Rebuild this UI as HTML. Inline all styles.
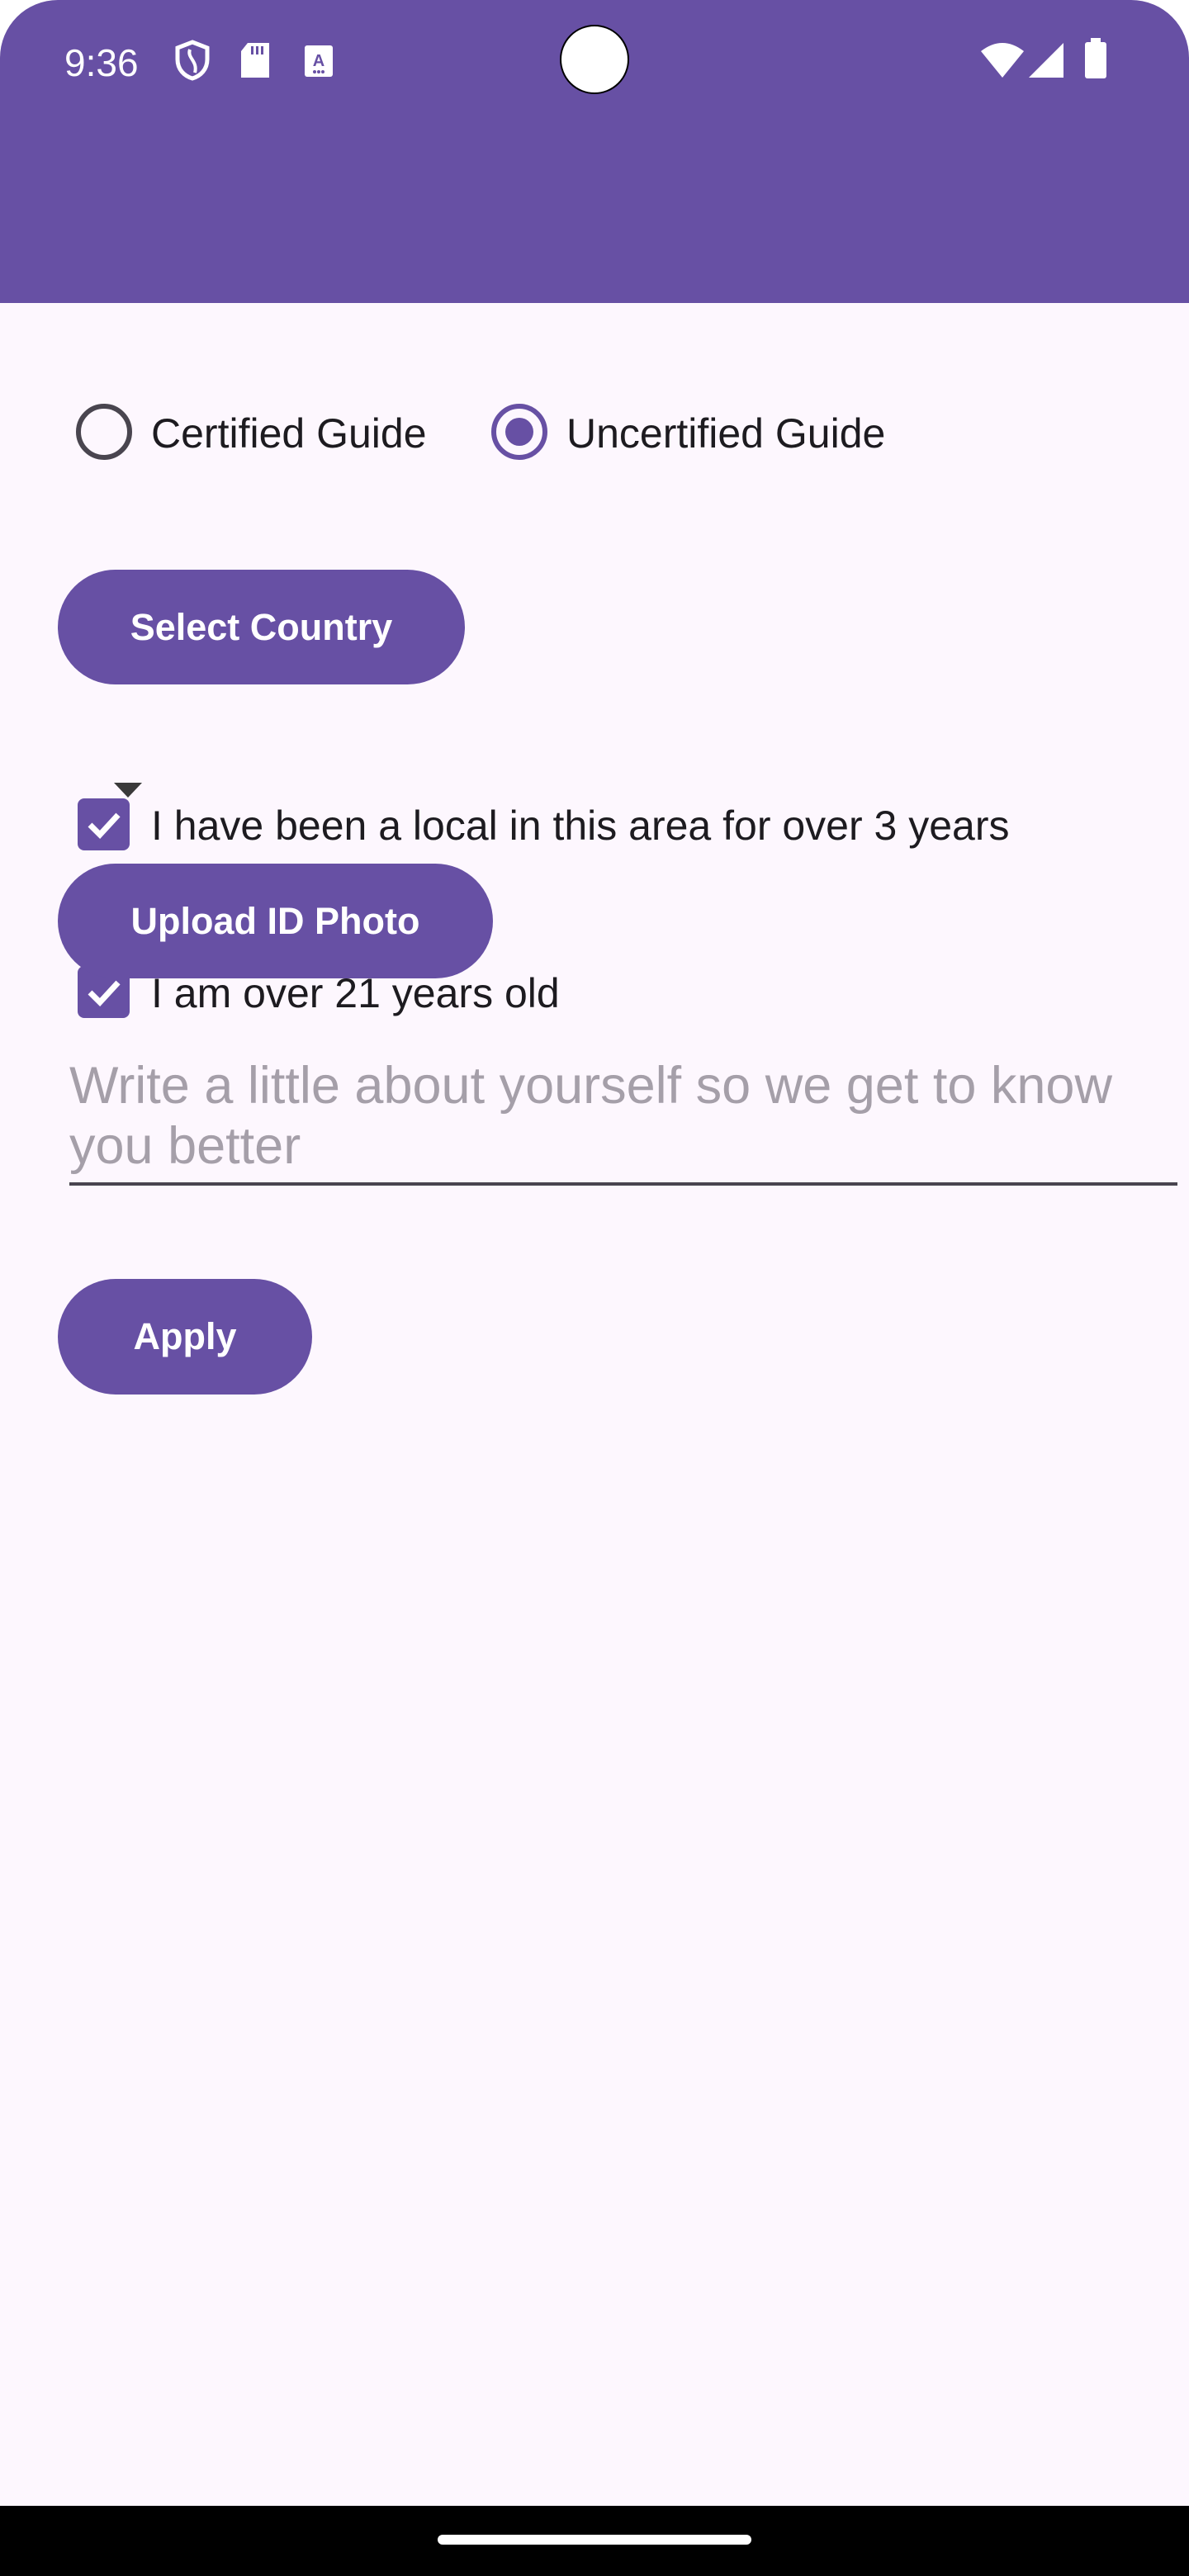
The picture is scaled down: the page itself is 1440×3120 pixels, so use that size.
<!DOCTYPE html>
<html><head><meta charset="utf-8"><style>
*{margin:0;padding:0;box-sizing:border-box}
html,body{width:1440px;height:3120px;background:#fff;overflow:hidden}
body{font-family:"Liberation Sans",sans-serif;position:relative}
#screen{position:absolute;left:0;top:0;width:1440px;height:3120px;background:#fdf7fe;border-radius:70px 70px 0 0;overflow:hidden}
#top{position:absolute;left:0;top:0;width:1440px;height:367px;background:#6750a4}
.abs{position:absolute}
.time{left:78px;top:49px;color:#fff;font-size:46px}
.cam{left:678px;top:30px;width:84px;height:84px;border-radius:50%;background:#fff;border:2px solid #000}
.txt{color:#1d1b20;font-size:50px;white-space:nowrap;line-height:1}
.btn{background:#6750a4;color:#fff;font-weight:bold;font-size:45px;border-radius:70px;display:flex;align-items:center;justify-content:center;white-space:nowrap}
.cb{width:63px;height:63px;background:#6750a4;border-radius:8px}
.radio{border-radius:50%;width:68px;height:68px}
</style></head><body>
<div id="screen">
<div id="top"></div>
<div class="abs time">9:36</div>
<svg class="abs" style="left:210px;top:48px" width="46" height="50" viewBox="0 0 46 50"><path d="M23 3 L41 10 V24 C41 36 33 44 23 47 C13 44 5 36 5 24 V10 Z" fill="none" stroke="#fff" stroke-width="5"/><path d="M20 12 C16 22 30 26 26 40" fill="none" stroke="#fff" stroke-width="4"/></svg>
<svg class="abs" style="left:290px;top:50px" width="38" height="46" viewBox="0 0 38 46"><path d="M10 2 H36 V44 H2 V12 Z" fill="#fff"/><rect x="14" y="6" width="3" height="10" fill="#6750a4"/><rect x="20" y="6" width="3" height="10" fill="#6750a4"/><rect x="26" y="6" width="3" height="10" fill="#6750a4"/></svg>
<svg class="abs" style="left:368px;top:54px" width="36" height="40" viewBox="0 0 36 40"><rect x="1" y="1" width="34" height="38" rx="3" fill="#fff"/><text x="18" y="26" font-size="20" font-family="Liberation Sans" font-weight="bold" text-anchor="middle" fill="#6750a4">A</text><circle cx="13" cy="33" r="2" fill="#6750a4"/><circle cx="18" cy="33" r="2" fill="#6750a4"/><circle cx="23" cy="33" r="2" fill="#6750a4"/></svg>
<div class="abs cam"></div>
<svg class="abs" style="left:1186px;top:50px" width="56" height="46" viewBox="0 0 56 46"><path d="M2 12 Q28 -8 54 12 L28 44 Z" fill="#fff"/></svg>
<svg class="abs" style="left:1244px;top:50px" width="46" height="46" viewBox="0 0 46 46"><path d="M44 2 V44 H2 Z" fill="#fff"/></svg>
<svg class="abs" style="left:1312px;top:46px" width="30" height="50" viewBox="0 0 30 50"><rect x="9" y="0" width="12" height="6" fill="#fff"/><rect x="2" y="5" width="26" height="44" rx="3" fill="#fff"/></svg>

<div class="abs radio" style="left:92px;top:489px;border:6px solid #49454f"></div>
<div class="abs txt" style="left:183px;top:500px">Certified Guide</div>
<div class="abs radio" style="left:595px;top:489px;border:6px solid #6750a4"></div>
<div class="abs" style="left:612px;top:506px;width:34px;height:34px;border-radius:50%;background:#6750a4"></div>
<div class="abs txt" style="left:686px;top:500px">Uncertified Guide</div>

<div class="abs btn" style="left:70px;top:690px;width:493px;height:139px">Select Country</div>

<svg class="abs" style="left:138px;top:948px" width="34" height="18" viewBox="0 0 34 18"><path d="M0 0 H34 L17 18 Z" fill="#3a3a3a"/></svg>
<div class="abs cb" style="left:94px;top:967px"></div>
<svg class="abs" style="left:94px;top:967px" width="63" height="63" viewBox="0 0 63 63"><path d="M15 32 L27 44 L49 20" fill="none" stroke="#fff" stroke-width="7"/></svg>
<div class="abs txt" style="left:183px;top:975px">I have been a local in this area for over 3 years</div>

<div class="abs cb" style="left:94px;top:1170px"></div>
<svg class="abs" style="left:94px;top:1170px" width="63" height="63" viewBox="0 0 63 63"><path d="M15 32 L27 44 L49 20" fill="none" stroke="#fff" stroke-width="7"/></svg>
<div class="abs txt" style="left:183px;top:1178px">I am over 21 years old</div>
<div class="abs btn" style="left:70px;top:1046px;width:527px;height:139px">Upload ID Photo</div>

<div class="abs" style="left:84px;top:1279px;color:#a59fa9;font-size:63px;line-height:73px;width:1342px">Write a little about yourself so we get to know you better</div>
<div class="abs" style="left:84px;top:1432px;width:1342px;height:4px;background:#49454f"></div>

<div class="abs btn" style="left:70px;top:1549px;width:308px;height:140px">Apply</div>

<div class="abs" style="left:0;top:3035px;width:1440px;height:85px;background:#000"></div>
<div class="abs" style="left:530px;top:3070px;width:380px;height:12px;border-radius:6px;background:#fff"></div>
</div>
</body></html>
